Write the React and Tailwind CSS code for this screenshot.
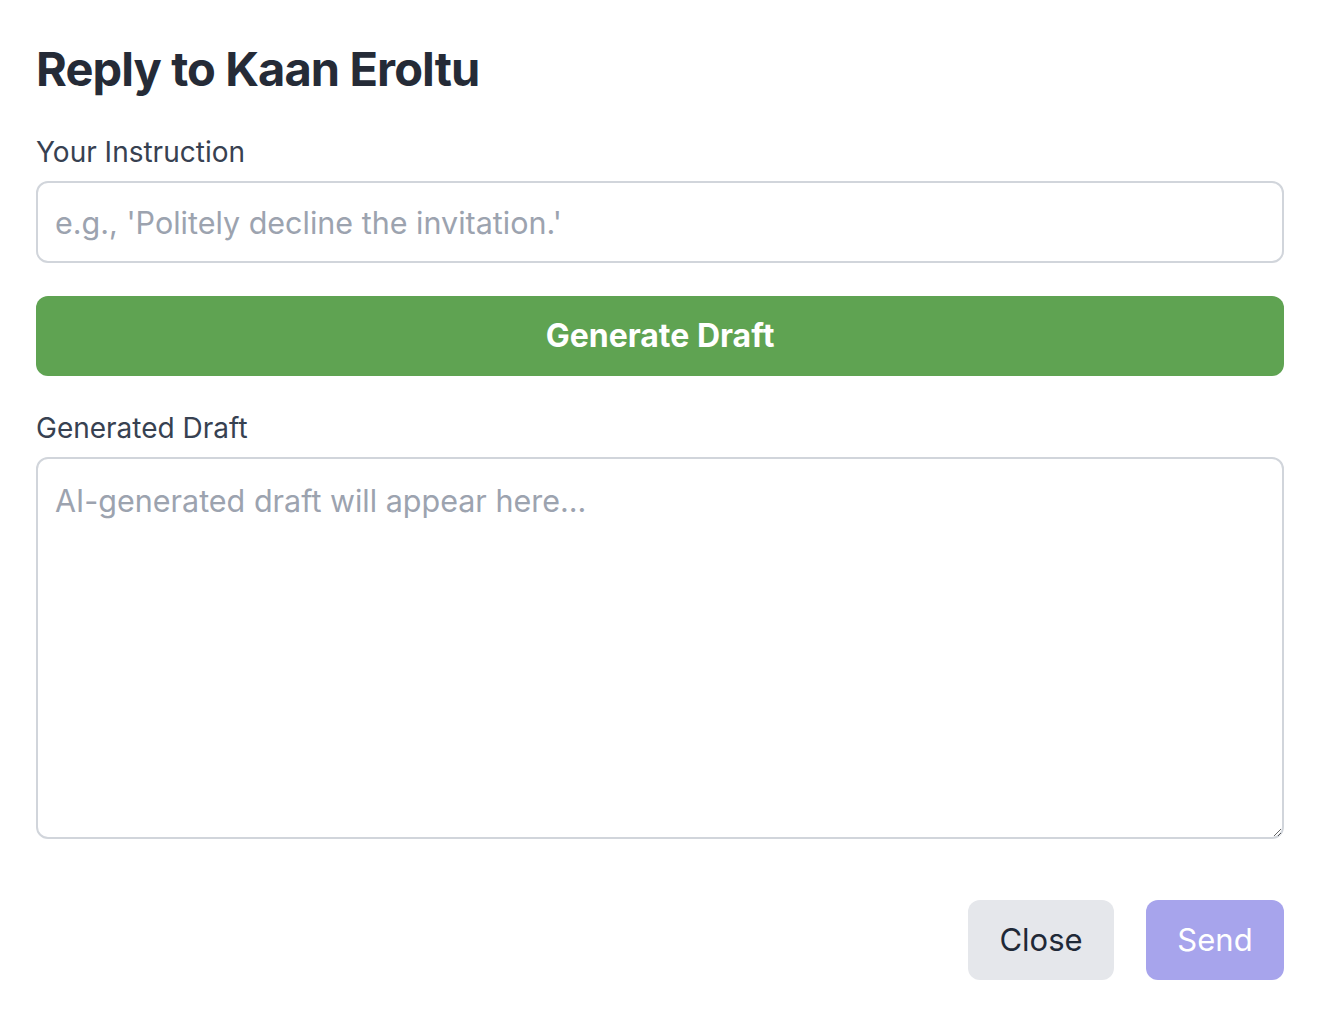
import React, { useState } from "react";

const App = () => {
  const [instruction, setInstruction] = useState("");
  const [draft, setDraft] = useState("");

  return (
    <div className="min-h-screen bg-white font-['Inter',sans-serif] pl-[36px] pr-[44px] pt-[37px]">
      <h1 className="text-[47px] leading-[64px] font-bold text-[#252b37] tracking-[-0.9px]">
        Reply to Kaan Eroltu
      </h1>

      <label className="block mt-[31px] mb-[9px] text-[28px] leading-[40px] text-[#374151]">
        Your Instruction
      </label>
      <input
        type="text"
        value={instruction}
        onChange={(e) => setInstruction(e.target.value)}
        placeholder="e.g., 'Politely decline the invitation.'"
        className="block w-full h-[82px] px-[17px] border-2 border-[#d1d5db] rounded-[12px] text-[30.5px] text-[#1f2937] placeholder-[#9ca3af] focus:outline-none"
      />

      <button className="mt-[33px] w-full h-[80px] rounded-[12px] bg-[#5fa352] text-white text-[32px] font-bold">
        Generate Draft
      </button>

      <label className="block mt-[32px] mb-[9px] text-[28px] leading-[40px] text-[#374151]">
        Generated Draft
      </label>
      <textarea
        value={draft}
        onChange={(e) => setDraft(e.target.value)}
        placeholder="AI-generated draft will appear here..."
        className="block w-full h-[382px] px-[17px] py-[20px] border-2 border-[#d1d5db] rounded-[12px] text-[30.5px] leading-[44px] text-[#1f2937] placeholder-[#9ca3af] focus:outline-none"
      />

      <div className="mt-[61px] flex justify-end gap-[32px]">
        <button className="w-[146px] h-[80px] rounded-[12px] bg-[#e5e7eb] text-[#1f2937] text-[31px]">
          Close
        </button>
        <button className="w-[138px] h-[80px] rounded-[12px] bg-[#a7a4ec] text-white text-[31px]">
          Send
        </button>
      </div>
    </div>
  );
};

export default App;
